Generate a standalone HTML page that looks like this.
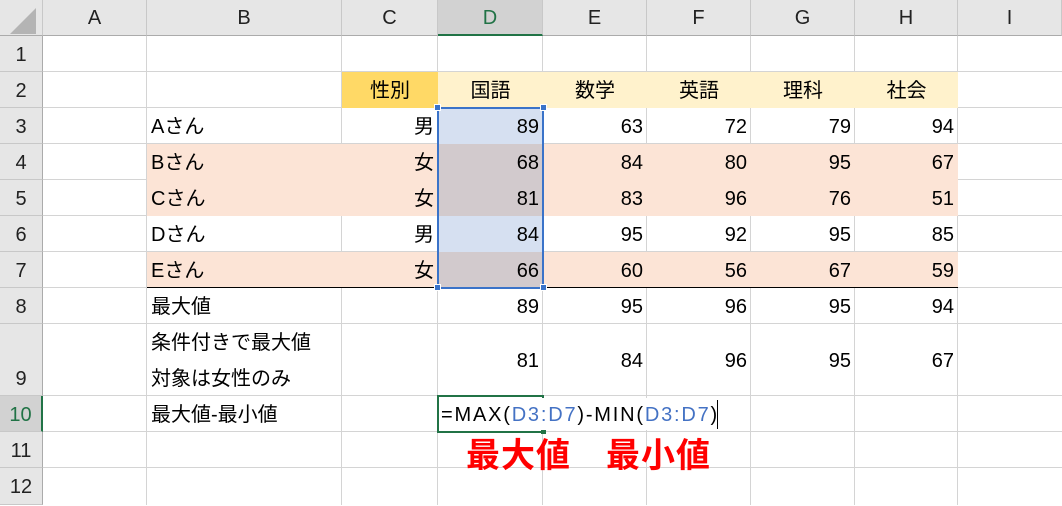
<!DOCTYPE html>
<html><head><meta charset="utf-8"><style>
body{margin:0;width:1062px;height:505px;overflow:hidden;background:#fff;font-family:"Liberation Sans","Noto Sans CJK JP",sans-serif;font-size:20px;color:#000;position:relative}
div{position:absolute;box-sizing:border-box}
.v{width:1px;top:36px;height:469px;background:#d4d4d4}
.h{height:1px;left:43px;width:1019px;background:#d4d4d4}
.ch{top:0;height:36px;background:#e6e6e6;border-right:1px solid #c8c8c8;border-bottom:1px solid #ababab;text-align:center;line-height:36px;font-size:20px;color:#222}
.rh{left:0;width:43px;background:#e6e6e6;border-bottom:1px solid #c8c8c8;border-right:1px solid #ababab;text-align:center;font-size:20px;color:#222}
.t{height:36px;line-height:38px;white-space:nowrap}
.r{text-align:right;padding-right:4px}
.l{padding-left:4px}
.c{text-align:center}
</style></head><body>
<div class="v" style="left:146px"></div><div class="v" style="left:341px"></div><div class="v" style="left:437px"></div><div class="v" style="left:542px"></div><div class="v" style="left:646px"></div><div class="v" style="left:750px"></div><div class="v" style="left:854px"></div><div class="v" style="left:957px"></div>
<div class="h" style="top:71px"></div><div class="h" style="top:107px"></div><div class="h" style="top:143px"></div><div class="h" style="top:179px"></div><div class="h" style="top:215px"></div><div class="h" style="top:251px"></div><div class="h" style="top:287px"></div><div class="h" style="top:323px"></div><div class="h" style="top:395px"></div><div class="h" style="top:431px"></div><div class="h" style="top:467px"></div>
<div style="left:342px;top:72px;width:96px;height:36px;background:#ffd966"></div>
<div style="left:438px;top:72px;width:520px;height:36px;background:#fff2cc"></div>
<div style="left:147px;top:144px;width:811px;height:72px;background:#fce4d6"></div>
<div style="left:147px;top:252px;width:811px;height:36px;background:#fce4d6"></div>
<div style="left:438px;top:108px;width:105px;height:36px;background:#d6e0f1"></div>
<div style="left:438px;top:216px;width:105px;height:36px;background:#d6e0f1"></div>
<div style="left:438px;top:144px;width:105px;height:72px;background:#d2cacd"></div>
<div style="left:438px;top:252px;width:105px;height:36px;background:#d2cacd"></div>
<div style="left:147px;top:287px;width:811px;height:1px;background:#000"></div>
<div style="left:437px;top:107px;width:107px;height:182px;border:2px solid #3a73c9"></div>
<div style="left:434px;top:104px;width:7px;height:7px;background:#3a73c9;border:1px solid #fff"></div>
<div style="left:540px;top:104px;width:7px;height:7px;background:#3a73c9;border:1px solid #fff"></div>
<div style="left:434px;top:284px;width:7px;height:7px;background:#3a73c9;border:1px solid #fff"></div>
<div style="left:540px;top:284px;width:7px;height:7px;background:#3a73c9;border:1px solid #fff"></div>
<div style="left:437px;top:395px;width:107px;height:38px;border:2px solid #217346"></div>
<div style="left:541px;top:429px;width:5px;height:5px;background:#217346"></div>
<div class="ch" style="left:0;width:43px"></div>
<div style="left:10px;top:8px;width:0;height:0;border-left:26px solid transparent;border-bottom:26px solid #b4b4b4"></div>
<div class="ch" style="left:43px;width:104px">A</div><div class="ch" style="left:147px;width:195px">B</div><div class="ch" style="left:342px;width:96px">C</div>
<div class="ch" style="left:438px;width:105px;background:#d2d2d2;border-bottom:2px solid #217346;color:#217346">D</div>
<div class="ch" style="left:543px;width:104px">E</div><div class="ch" style="left:647px;width:104px">F</div><div class="ch" style="left:751px;width:104px">G</div><div class="ch" style="left:855px;width:103px">H</div><div class="ch" style="left:958px;width:104px">I</div>
<div class="rh" style="top:36px;height:36px;line-height:38px">1</div>
<div class="rh" style="top:72px;height:36px;line-height:38px">2</div>
<div class="rh" style="top:108px;height:36px;line-height:38px">3</div>
<div class="rh" style="top:144px;height:36px;line-height:38px">4</div>
<div class="rh" style="top:180px;height:36px;line-height:38px">5</div>
<div class="rh" style="top:216px;height:36px;line-height:38px">6</div>
<div class="rh" style="top:252px;height:36px;line-height:38px">7</div>
<div class="rh" style="top:288px;height:36px;line-height:38px">8</div>
<div class="rh" style="top:324px;height:72px;line-height:110px">9</div>
<div class="rh" style="top:396px;height:36px;line-height:38px;background:#d2d2d2;border-right:2px solid #217346;color:#217346">10</div>
<div class="rh" style="top:432px;height:36px;line-height:38px">11</div>
<div class="rh" style="top:468px;height:37px;line-height:38px">12</div>
<div class="t c" style="left:342px;top:72px;width:96px">性別</div>
<div class="t c" style="left:438px;top:72px;width:105px">国語</div>
<div class="t c" style="left:543px;top:72px;width:104px">数学</div>
<div class="t c" style="left:647px;top:72px;width:104px">英語</div>
<div class="t c" style="left:751px;top:72px;width:104px">理科</div>
<div class="t c" style="left:855px;top:72px;width:103px">社会</div>
<div class="t l" style="left:147px;top:108px">Aさん</div><div class="t r" style="left:342px;top:108px;width:96px">男</div><div class="t r" style="left:438px;top:108px;width:105px">89</div><div class="t r" style="left:543px;top:108px;width:104px">63</div><div class="t r" style="left:647px;top:108px;width:104px">72</div><div class="t r" style="left:751px;top:108px;width:104px">79</div><div class="t r" style="left:855px;top:108px;width:103px">94</div>
<div class="t l" style="left:147px;top:144px">Bさん</div><div class="t r" style="left:342px;top:144px;width:96px">女</div><div class="t r" style="left:438px;top:144px;width:105px">68</div><div class="t r" style="left:543px;top:144px;width:104px">84</div><div class="t r" style="left:647px;top:144px;width:104px">80</div><div class="t r" style="left:751px;top:144px;width:104px">95</div><div class="t r" style="left:855px;top:144px;width:103px">67</div>
<div class="t l" style="left:147px;top:180px">Cさん</div><div class="t r" style="left:342px;top:180px;width:96px">女</div><div class="t r" style="left:438px;top:180px;width:105px">81</div><div class="t r" style="left:543px;top:180px;width:104px">83</div><div class="t r" style="left:647px;top:180px;width:104px">96</div><div class="t r" style="left:751px;top:180px;width:104px">76</div><div class="t r" style="left:855px;top:180px;width:103px">51</div>
<div class="t l" style="left:147px;top:216px">Dさん</div><div class="t r" style="left:342px;top:216px;width:96px">男</div><div class="t r" style="left:438px;top:216px;width:105px">84</div><div class="t r" style="left:543px;top:216px;width:104px">95</div><div class="t r" style="left:647px;top:216px;width:104px">92</div><div class="t r" style="left:751px;top:216px;width:104px">95</div><div class="t r" style="left:855px;top:216px;width:103px">85</div>
<div class="t l" style="left:147px;top:252px">Eさん</div><div class="t r" style="left:342px;top:252px;width:96px">女</div><div class="t r" style="left:438px;top:252px;width:105px">66</div><div class="t r" style="left:543px;top:252px;width:104px">60</div><div class="t r" style="left:647px;top:252px;width:104px">56</div><div class="t r" style="left:751px;top:252px;width:104px">67</div><div class="t r" style="left:855px;top:252px;width:103px">59</div>
<div class="t l" style="left:147px;top:288px">最大値</div><div class="t r" style="left:438px;top:288px;width:105px">89</div><div class="t r" style="left:543px;top:288px;width:104px">95</div><div class="t r" style="left:647px;top:288px;width:104px">96</div><div class="t r" style="left:751px;top:288px;width:104px">95</div><div class="t r" style="left:855px;top:288px;width:103px">94</div>
<div class="t l" style="left:147px;top:324px">条件付きで最大値</div><div class="t l" style="left:147px;top:360px">対象は女性のみ</div>
<div class="t r" style="left:438px;top:342px;width:105px">81</div><div class="t r" style="left:543px;top:342px;width:104px">84</div><div class="t r" style="left:647px;top:342px;width:104px">96</div><div class="t r" style="left:751px;top:342px;width:104px">95</div><div class="t r" style="left:855px;top:342px;width:103px">67</div>
<div class="t l" style="left:147px;top:396px">最大値-最小値</div>
<div class="t" style="left:441px;top:398px;height:32px;line-height:34px;background:#fff;padding-right:2px;letter-spacing:1.8px">=MAX(<span style="color:#4472c4">D3:D7</span>)-MIN(<span style="color:#4472c4">D3:D7</span>)</div>
<div style="left:717px;top:400px;width:1px;height:29px;background:#000"></div>
<div style="left:466px;top:436px;font-size:34px;font-weight:bold;color:#ff0000;line-height:40px;white-space:nowrap;letter-spacing:1px">最大値　最小値</div>
</body></html>
